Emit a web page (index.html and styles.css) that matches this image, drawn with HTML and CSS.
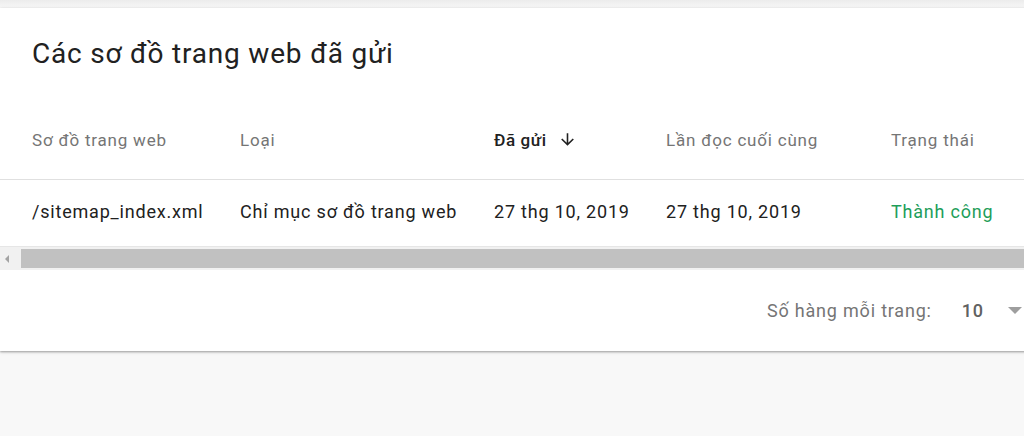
FILE: index.html
```html
<!DOCTYPE html>
<html lang="vi">
<head>
  <meta charset="UTF-8">
  <meta name="viewport" content="width=device-width, initial-scale=1.0">
  <title>Sơ đồ trang web</title>
  <link rel="stylesheet" href="styles.css">
</head>
<body>

  <div class="card">
      <h2 class="card-title">Các sơ đồ trang web đã gửi</h2>

      <table class="sitemaps">
          <thead>
              <tr>
                  <th class="col-map">Sơ đồ trang web</th>
                  <th class="col-type">Loại</th>
                  <th class="col-sent sorted">Đã gửi
                      <svg class="sort-icon" viewBox="0 0 24 24" width="19" height="19">
                          <path d="M20 12l-1.41-1.41L13 16.17V4h-2v12.17l-5.58-5.59L4 12l8 8 8-8z"/>
                      </svg>
                  </th>
                  <th class="col-read">Lần đọc cuối cùng</th>
                  <th class="col-status">Trạng thái</th>
              </tr>
          </thead>
          <tbody>
              <tr>
                  <td>/sitemap_index.xml</td>
                  <td>Chỉ mục sơ đồ trang web</td>
                  <td>27 thg 10, 2019</td>
                  <td>27 thg 10, 2019</td>
                  <td class="status-ok">Thành công</td>
              </tr>
          </tbody>
      </table>

      <div class="hscroll">
          <span class="hscroll-arrow"></span>
          <div class="hscroll-thumb"></div>
      </div>

      <div class="card-footer">
          <span class="rows-label">Số hàng mỗi trang:</span>
          <span class="rows-value">10</span>
          <span class="rows-caret"></span>
      </div>
  </div>

</body>
</html>
```

FILE: styles.css
```css
html, body {
    margin: 0;
    overflow: hidden;
}

body {
    font-family: Roboto, "Noto Sans", Arial, sans-serif;
    letter-spacing: 0.8px;
    background-color: #f8f8f8;
    padding-top: 8px;
    height: 428px;
    background-image: linear-gradient(#ececec, #f8f8f8 8px);
    background-repeat: no-repeat;
}

.card {
    width: 1100px;
    background-color: white;
    box-shadow: 0 1px 2px rgba(0, 0, 0, 0.3), 0 1px 4px rgba(0, 0, 0, 0.12);
}

.card-title {
    margin: 0;
    padding: 30px 32px 30px;
    font-size: 28px;
    line-height: 32px;
    font-weight: 400;
    color: #212121;
}

.sitemaps {
    border-collapse: collapse;
    table-layout: fixed;
    width: 1100px;
}

.sitemaps th,
.sitemaps td {
    text-align: left;
    padding: 0;
    white-space: nowrap;
}

.sitemaps th {
    height: 79px;
    font-size: 17px;
    font-weight: 400;
    color: #757575;
    border-bottom: 1px solid #e0e0e0;
}

.sitemaps td {
    height: 63px;
    padding-bottom: 3px;
    font-size: 18px;
    color: #212121;
}

.sitemaps th:first-child,
.sitemaps td:first-child {
    padding-left: 32px;
}

.col-map { width: 208px; }
.col-type { width: 254px; }
.col-sent { width: 172px; }
.col-read { width: 225px; }

.sitemaps th.sorted {
    color: #212121;
    font-weight: 500;
    letter-spacing: 0.6px;
}

.sort-icon {
    fill: #212121;
    vertical-align: -3px;
    margin-left: 6px;
}

.sitemaps td.status-ok {
    color: #1e9e5a;
}

.hscroll {
    position: relative;
    height: 23px;
    background-color: #f1f1f1;
    border-top: 1px solid #e6e6e6;
}

.hscroll-arrow {
    position: absolute;
    left: 5px;
    top: 8px;
    border-top: 4px solid transparent;
    border-bottom: 4px solid transparent;
    border-right: 4px solid #a3a3a3;
}

.hscroll-thumb {
    margin-left: 21px;
    position: relative;
    top: 2px;
    height: 19px;
    background-color: #c1c1c1;
}

.card-footer {
    height: 81px;
    display: flex;
    align-items: center;
    padding-left: 767px;
    font-size: 18px;
    color: #757575;
}

.rows-value {
    margin-left: 30px;
    font-weight: 500;
    color: #616161;
}

.rows-caret {
    margin-left: 24px;
    border-left: 7px solid transparent;
    border-right: 7px solid transparent;
    border-top: 7px solid #9e9e9e;
}
```
